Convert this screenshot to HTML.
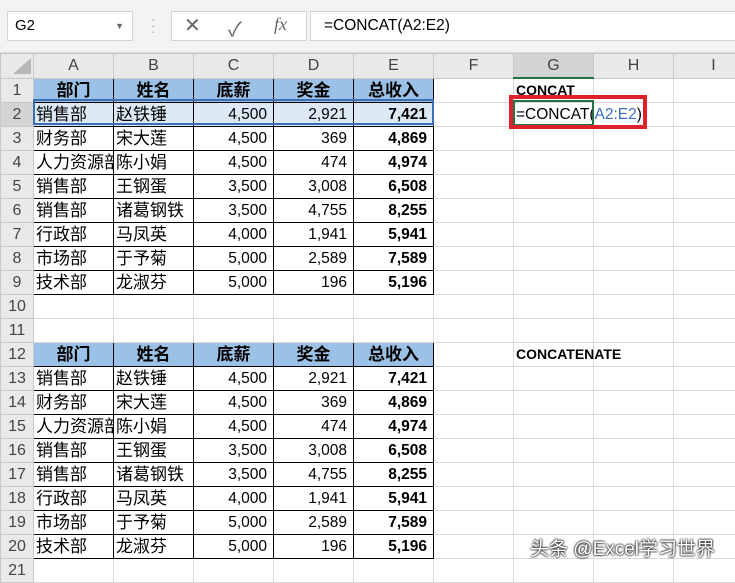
<!DOCTYPE html>
<html><head><meta charset="utf-8"><style>
body{margin:0;width:735px;height:572px;overflow:hidden;background:#fff;font-family:"Liberation Sans","Noto Sans CJK SC",sans-serif;position:relative}
.top{position:absolute;left:0;top:0;width:735px;height:52px;background:#f3f3f3;border-bottom:1px solid #d8d8d8}
.box{position:absolute;background:#fff;border:1px solid #d4d4d4}
table{position:absolute;left:0;top:53px;width:753px;border-collapse:collapse;table-layout:fixed}
td{height:23px;border:1px solid #d9d9d9;padding:0 2px;font-size:17px;white-space:nowrap;overflow:hidden;line-height:23px;color:#000}
td.rh{background:#e9e9e9;color:#444;text-align:center;font-size:16px;border-color:#c8c8c8;padding:0}
tr.ch td{background:#e9e9e9;color:#444;text-align:center;font-size:16px;border-color:#c8c8c8}
td.h{background:#9bc2e6;font-weight:bold;text-align:center;border:1px solid #000}
td.t{border:1px solid #000;text-overflow:clip}
td.n{text-align:right;font-size:15.5px;border:1px solid #000;padding-right:6px}
td.b{font-weight:bold}
tr.sel td.t,tr.sel td.n{background:#dde8f5}
.lab{font-weight:bold;font-size:14px;overflow:visible}
</style></head><body>
<div class="top"></div>
<div class="box" style="left:7px;top:11px;width:124px;height:28px"><span style="position:absolute;left:7px;top:5px;font-size:15px">G2</span><span style="position:absolute;right:8px;top:9px;font-size:9px;color:#666">▼</span></div>
<div style="position:absolute;left:151px;top:16px;color:#aaa;font-size:14px;line-height:6px">·<br>·<br>·</div>
<div class="box" style="left:171px;top:11px;width:134px;height:28px;color:#666;font-size:20px">
<span style="position:absolute;left:12px;top:1px">✕</span><span style="position:absolute;left:56px;top:1px">✓</span><span style="position:absolute;left:102px;top:2px;font-family:'Liberation Serif',serif;font-style:italic;font-size:18px">fx</span></div>
<div class="box" style="left:310px;top:11px;width:430px;height:28px"><span style="position:absolute;left:13px;top:5px;font-size:15.5px">=CONCAT(A2:E2)</span></div>
<div style="position:absolute;left:13px;top:58px;width:0;height:0;border-left:18px solid transparent;border-bottom:16px solid #b8b8b8;z-index:2"></div>
<table>
<colgroup><col style="width:33px"><col style="width:80px"><col style="width:80px"><col style="width:80px"><col style="width:80px"><col style="width:80px"><col style="width:80px"><col style="width:80px"><col style="width:80px"><col style="width:80px"></colgroup>
<tr class="ch"><td></td><td>A</td><td>B</td><td>C</td><td>D</td><td>E</td><td>F</td><td style="background:#d4d4d4;border-bottom:2px solid #217346">G</td><td>H</td><td>I</td></tr>
<tr><td class="rh">1</td><td class="h">部门</td><td class="h">姓名</td><td class="h">底薪</td><td class="h">奖金</td><td class="h">总收入</td><td></td><td class="lab">CONCAT</td><td></td><td></td></tr>
<tr class="sel"><td class="rh" style="background:#d4d4d4">2</td><td class="t">销售部</td><td class="t">赵铁锤</td><td class="n">4,500</td><td class="n">2,921</td><td class="n b">7,421</td><td></td><td style="font-size:15.5px;overflow:visible">=CONCAT(<span style="color:#3a6fc4">A2:E2</span>)</td><td></td><td></td></tr>
<tr><td class="rh">3</td><td class="t">财务部</td><td class="t">宋大莲</td><td class="n">4,500</td><td class="n">369</td><td class="n b">4,869</td><td></td><td></td><td></td><td></td></tr>
<tr><td class="rh">4</td><td class="t">人力资源部</td><td class="t">陈小娟</td><td class="n">4,500</td><td class="n">474</td><td class="n b">4,974</td><td></td><td></td><td></td><td></td></tr>
<tr><td class="rh">5</td><td class="t">销售部</td><td class="t">王钢蛋</td><td class="n">3,500</td><td class="n">3,008</td><td class="n b">6,508</td><td></td><td></td><td></td><td></td></tr>
<tr><td class="rh">6</td><td class="t">销售部</td><td class="t">诸葛钢铁</td><td class="n">3,500</td><td class="n">4,755</td><td class="n b">8,255</td><td></td><td></td><td></td><td></td></tr>
<tr><td class="rh">7</td><td class="t">行政部</td><td class="t">马凤英</td><td class="n">4,000</td><td class="n">1,941</td><td class="n b">5,941</td><td></td><td></td><td></td><td></td></tr>
<tr><td class="rh">8</td><td class="t">市场部</td><td class="t">于予菊</td><td class="n">5,000</td><td class="n">2,589</td><td class="n b">7,589</td><td></td><td></td><td></td><td></td></tr>
<tr><td class="rh">9</td><td class="t">技术部</td><td class="t">龙淑芬</td><td class="n">5,000</td><td class="n">196</td><td class="n b">5,196</td><td></td><td></td><td></td><td></td></tr>
<tr><td class="rh">10</td><td></td><td></td><td></td><td></td><td></td><td></td><td></td><td></td><td></td></tr>
<tr><td class="rh">11</td><td></td><td></td><td></td><td></td><td></td><td></td><td></td><td></td><td></td></tr>
<tr><td class="rh">12</td><td class="h">部门</td><td class="h">姓名</td><td class="h">底薪</td><td class="h">奖金</td><td class="h">总收入</td><td></td><td class="lab">CONCATENATE</td><td></td><td></td></tr>
<tr><td class="rh">13</td><td class="t">销售部</td><td class="t">赵铁锤</td><td class="n">4,500</td><td class="n">2,921</td><td class="n b">7,421</td><td></td><td></td><td></td><td></td></tr>
<tr><td class="rh">14</td><td class="t">财务部</td><td class="t">宋大莲</td><td class="n">4,500</td><td class="n">369</td><td class="n b">4,869</td><td></td><td></td><td></td><td></td></tr>
<tr><td class="rh">15</td><td class="t">人力资源部</td><td class="t">陈小娟</td><td class="n">4,500</td><td class="n">474</td><td class="n b">4,974</td><td></td><td></td><td></td><td></td></tr>
<tr><td class="rh">16</td><td class="t">销售部</td><td class="t">王钢蛋</td><td class="n">3,500</td><td class="n">3,008</td><td class="n b">6,508</td><td></td><td></td><td></td><td></td></tr>
<tr><td class="rh">17</td><td class="t">销售部</td><td class="t">诸葛钢铁</td><td class="n">3,500</td><td class="n">4,755</td><td class="n b">8,255</td><td></td><td></td><td></td><td></td></tr>
<tr><td class="rh">18</td><td class="t">行政部</td><td class="t">马凤英</td><td class="n">4,000</td><td class="n">1,941</td><td class="n b">5,941</td><td></td><td></td><td></td><td></td></tr>
<tr><td class="rh">19</td><td class="t">市场部</td><td class="t">于予菊</td><td class="n">5,000</td><td class="n">2,589</td><td class="n b">7,589</td><td></td><td></td><td></td><td></td></tr>
<tr><td class="rh">20</td><td class="t">技术部</td><td class="t">龙淑芬</td><td class="n">5,000</td><td class="n">196</td><td class="n b">5,196</td><td></td><td></td><td></td><td></td></tr>
<tr><td class="rh">21</td><td></td><td></td><td></td><td></td><td></td><td></td><td></td><td></td><td></td></tr>
</table>
<div style="position:absolute;left:33px;top:99px;width:401px;height:26px;border:2px solid #3a6fb5;box-sizing:border-box"></div>
<div style="position:absolute;left:513px;top:100px;width:81px;height:26px;border:2px solid #217346;box-sizing:border-box"></div>
<div style="position:absolute;left:509px;top:95px;width:138px;height:34px;border:4px solid #e0202a;box-sizing:border-box"></div>
<div style="position:absolute;left:530px;top:534px;color:#fff;font-size:19px;text-shadow:0 0 2px #000,0 0 2px #000">头条 @Excel学习世界</div>
</body></html>
